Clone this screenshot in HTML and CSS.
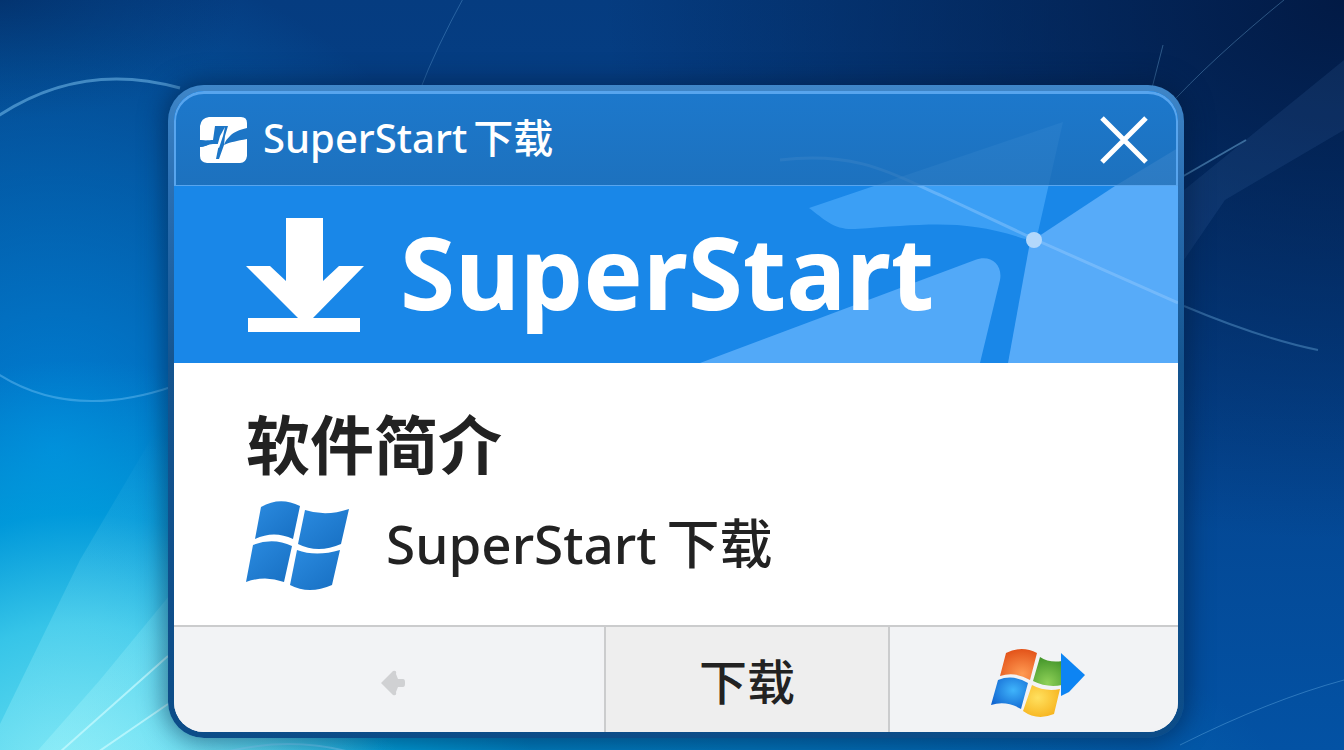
FILE: index.html
```html
<!DOCTYPE html>
<html lang="zh-CN">
<head>
    <meta charset="UTF-8">
    <meta name="viewport" content="width=device-width, initial-scale=1.0">
    <title>SuperStart 下载</title>
    <link rel="stylesheet" href="styles.css">
</head>
<body>
    <svg class="wallpaper" viewBox="0 0 1344 750" preserveAspectRatio="none" aria-hidden="true">
        <defs>
            <radialGradient id="ray" gradientUnits="userSpaceOnUse" cx="60" cy="760" r="340">
                <stop offset="0" stop-color="#b5fbff" stop-opacity=".3"/>
                <stop offset="1" stop-color="#b5fbff" stop-opacity="0"/>
            </radialGradient>
        </defs>
        <path d="M-20 765 L80 560 L174 400 L420 765Z" fill="url(#ray)"/>
        <path d="M25 765 L100 680 L174 590 L420 765Z" fill="url(#ray)"/>
        <path d="M1344 60 L1184 190 L1184 260 L1225 200 L1344 130Z" fill="#5d8fd0" opacity=".12"/>
        <g fill="none" stroke="#8fd4ff">
            <path d="M-5 118 Q80 60 180 88" stroke-width="3" opacity=".45"/>
            <path d="M-5 372 Q70 422 174 386" stroke-width="2" opacity=".35"/>
            <path d="M465 -5 Q435 50 420 90" opacity=".25"/>
            <path d="M60 752 L168 656 M98 752 L168 704" stroke="#c9fbff" stroke-width="2" opacity=".7"/>
            <path d="M1290 -5 Q1210 60 1165 110 M1163 45 L1152 88" opacity=".3"/>
            <path d="M1180 178 L1246 140" stroke-width="2" opacity=".4"/>
            <path d="M1184 306 Q1260 338 1318 350" stroke-width="2" opacity=".3"/>
            <path d="M1180 745 Q1270 700 1344 680" opacity=".3"/>
            <path d="M225 752 Q290 736 350 752" stroke-width="2" opacity=".4"/>
        </g>
    </svg>

    <main class="window">
        <div class="window-top">
            <svg class="window-art" viewBox="174 91 1004 272" preserveAspectRatio="none" aria-hidden="true">
                <path d="M809 208 L1063 122 L1038 232 L1025 239 C965 219 930 224 855 229 C834 230 825 220 809 208Z" fill="#3b9ff5"/>
                <path d="M700 363 L975 260 C990 254 1003 264 1000 280 L980 363Z" fill="#52a9f8"/>
                <path d="M1030 242 L1115 186 L1178 148 V363 H1008Z" fill="#57abf9"/>
                <path d="M780 160 C860 150 900 178 940 195 L1034 239 L1178 303" fill="none" stroke="#9dd0ff" stroke-width="3" opacity=".4"/>
                <circle cx="1034" cy="240" r="8" fill="#b3d8fb"/>
            </svg>

            <header class="title-bar">
                <svg class="app-icon" viewBox="0 0 48 48" aria-hidden="true">
                    <path d="M10 1 H42 Q48 1 48 7 V12 C40 14 35 16 31 20 C27 24 26 26 25 29 C31 26 38 25 48 23 V40 Q47 47 41 47 H8 Q1 46 1 40 V31 C7 31 11 27 15 26 L1 24 V10 Q2 2 10 1Z" fill="#fff"/>
                    <path d="M1 24 C7 25 11 24 14 24 L16 10 H29 L26 20 L25 29 L20 43 H17 L20 28 L14 28 C9 28 6 31 1 31Z" fill="#1c76c7"/>
                    <path d="M26 11 L24 20 L20 32 L18 31 L21 20Z" fill="#fff"/>
                </svg>
                <p class="title"><span>SuperStart</span><span>下载</span></p>
                <button class="close-btn" type="button" aria-label="关闭">
                    <svg viewBox="0 0 48 48" aria-hidden="true">
                        <path d="M2 2 L46 46 M46 2 L2 46" stroke="#fff" stroke-width="5"/>
                    </svg>
                </button>
            </header>

            <div class="banner">
                <svg class="download-icon" viewBox="0 0 118 114" aria-hidden="true">
                    <path d="M40 0 H77 V63 L93 48 H118 L67 100 H114 V114 H2 V100 H52 L0 48 H24 L40 63Z" fill="#fff"/>
                </svg>
                <h1>SuperStart</h1>
            </div>
        </div>

        <section class="intro">
            <h2>软件简介</h2>
            <div class="intro-row">
                <svg class="flag-icon" viewBox="0 2 104 90" aria-hidden="true">
                    <defs>
                        <linearGradient id="flagBlue" x1="0" y1="0" x2="1" y2="1">
                            <stop offset="0" stop-color="#2b8be0"/>
                            <stop offset="1" stop-color="#176fc2"/>
                        </linearGradient>
                    </defs>
                    <g fill="url(#flagBlue)">
                        <path d="M15 8 Q34 -3 54 7 L47 40 Q28 31 9 40Z"/>
                        <path d="M59 11 Q80 18 103 10 L95 45 Q72 55 52 45Z"/>
                        <path d="M7 46 Q27 38 46 47 L38 83 Q19 76 0 83Z"/>
                        <path d="M51 51 Q70 58 94 51 L86 86 Q63 96 44 86Z"/>
                    </g>
                </svg>
                <p class="app-name"><span>SuperStart</span><span>下载</span></p>
            </div>
        </section>

        <footer class="actions">
            <button class="action" type="button" aria-label="返回">
                <svg class="back-icon" viewBox="0 0 24 26" aria-hidden="true">
                    <path d="M0 13 L12 1 Q16 0 15 4 L17 9 H22 Q24 9 24 12 V14 Q24 17 22 17 H17 L15 22 Q16 26 12 25Z" fill="#d0d1d3"/>
                </svg>
            </button>
            <button class="action action-download" type="button">下载</button>
            <button class="action" type="button" aria-label="启动">
                <svg class="start-icon" viewBox="0 0 94 68" aria-hidden="true">
                    <defs>
                        <radialGradient id="red" cx=".6" cy=".8" r=".9">
                            <stop offset="0" stop-color="#ff9a52"/>
                            <stop offset="1" stop-color="#df4a12"/>
                        </radialGradient>
                        <radialGradient id="green" cx=".5" cy=".9" r=".9">
                            <stop offset="0" stop-color="#8fd158"/>
                            <stop offset="1" stop-color="#43952a"/>
                        </radialGradient>
                        <radialGradient id="blue" cx=".6" cy=".4" r=".8">
                            <stop offset="0" stop-color="#3fb4fb"/>
                            <stop offset="1" stop-color="#0a58c9"/>
                        </radialGradient>
                        <radialGradient id="yellow" cx=".4" cy=".4" r=".8">
                            <stop offset="0" stop-color="#ffe15f"/>
                            <stop offset="1" stop-color="#f5ab12"/>
                        </radialGradient>
                    </defs>
                    <path d="M15 4 Q31 -4 46 4 L39 31 Q24 22 9 27Z" fill="url(#red)"/>
                    <path d="M49 8 Q58 14 71 12 V36 Q56 39 42 32Z" fill="url(#green)"/>
                    <path d="M7 31 Q22 25 37 34 L30 60 Q15 51 0 56Z" fill="url(#blue)"/>
                    <path d="M41 36 Q54 43 69 40 L63 65 Q46 72 32 62Z" fill="url(#yellow)"/>
                    <path d="M70 4 L94 26 L78 43 L70 47Z" fill="#0d84f3"/>
                </svg>
            </button>
        </footer>
    </main>
</body>
</html>
```
FILE: styles.css
```css
* {
    margin: 0;
    padding: 0;
    box-sizing: border-box;
}

body {
    min-height: 100vh;
    padding: 85px 160px 12px 168px;
    font-family: "Noto Sans", "Noto Sans CJK SC", sans-serif;
    color: #222;
    overflow: hidden;
    background:
        radial-gradient(ellipse 460px 480px at 6% 112%, #7beaf5 0%, rgba(60, 205, 236, 0.9) 45%, rgba(0, 174, 228, 0.6) 68%, rgba(0, 150, 220, 0) 100%),
        radial-gradient(ellipse 900px 300px at 30% 110%, rgba(0, 150, 205, 0.9) 0%, rgba(0, 130, 200, 0) 100%),
        radial-gradient(ellipse 480px 500px at 4% 60%, rgba(0, 140, 226, 0.85) 0%, rgba(0, 110, 205, 0) 100%),
        radial-gradient(ellipse 240px 120px at 0% 0%, #032c66 0%, rgba(3, 44, 102, 0) 100%),
        radial-gradient(ellipse 740px 540px at 100% 0%, #021a45 0%, rgba(2, 26, 69, 0) 100%),
        linear-gradient(180deg, #053c80 0%, #04438d 50%, #0352a4 100%);
}

.wallpaper {
    position: absolute;
    inset: 0;
    width: 100%;
    height: 100%;
}

.window {
    position: relative;
    padding: 6px;
    border-radius: 36px;
    background: linear-gradient(180deg, #3f86c8 0, #2b70b4 100px, #14548f 280px, #0c4c88 100%);
    box-shadow: 0 0 24px 4px rgba(0, 25, 60, 0.5);
}

.window-top {
    position: relative;
    background: #1987e8;
    border-radius: 30px 30px 0 0;
    overflow: hidden;
}

.window-art {
    position: absolute;
    inset: 0;
    width: 100%;
    height: 100%;
}

.title-bar {
    position: relative;
    display: flex;
    align-items: center;
    height: 95px;
    padding: 0 28px 0 23px;
    background: linear-gradient(180deg, rgba(30, 115, 194, 0.75), rgba(30, 106, 176, 0.75));
    border: 2px solid #58a5ee;
    border-top-width: 3px;
    border-bottom-width: 1px;
    border-radius: 30px 30px 0 0;
}

.app-icon {
    width: 48px;
    height: 48px;
}

.title {
    flex: 1;
    display: flex;
    align-items: baseline;
    gap: 6px;
    margin-left: 16px;
    padding-bottom: 4px;
    font-size: 40px;
    line-height: 56px;
    font-weight: 500;
    color: #fff;
}

.close-btn {
    width: 48px;
    height: 48px;
    border: none;
    background: none;
    cursor: pointer;
}

.close-btn svg {
    display: block;
    width: 100%;
    height: 100%;
}

.banner {
    position: relative;
    display: flex;
    align-items: center;
    gap: 36px;
    height: 177px;
    padding: 0 72px;
}

.download-icon {
    width: 118px;
    height: 114px;
}

.banner h1 {
    padding-bottom: 8px;
    font-size: 100px;
    line-height: 120px;
    font-weight: 700;
    color: #fff;
}

.intro {
    padding: 34px 72px;
    height: 262px;
    background: #fff;
}

.intro h2 {
    font-size: 64px;
    line-height: 96px;
    font-weight: 700;
}

.intro-row {
    display: flex;
    align-items: center;
    gap: 36px;
    padding-top: 8px;
}

.flag-icon {
    width: 104px;
    height: 90px;
}

.app-name {
    display: flex;
    align-items: baseline;
    gap: 10px;
    padding-bottom: 4px;
    font-size: 53px;
    line-height: 80px;
    font-weight: 500;
}

.actions {
    display: grid;
    grid-template-columns: 430fr 286fr 288fr;
    height: 107px;
    border-top: 2px solid #cbcccd;
    border-radius: 0 0 30px 30px;
    background: #f2f3f5;
    overflow: hidden;
}

.action {
    display: flex;
    align-items: center;
    justify-content: center;
    padding: 6px 0 0 8px;
    border: none;
    background: #f2f3f5;
    cursor: pointer;
}

.action-download {
    padding: 4px 0 0;
    border-left: 2px solid #cbcccd;
    border-right: 2px solid #cbcccd;
    background: #eee;
    font-family: inherit;
    font-size: 48px;
    line-height: 64px;
    font-weight: 500;
    color: #222;
}

.back-icon {
    width: 24px;
    height: 26px;
}

.start-icon {
    width: 94px;
    height: 68px;
}
```
